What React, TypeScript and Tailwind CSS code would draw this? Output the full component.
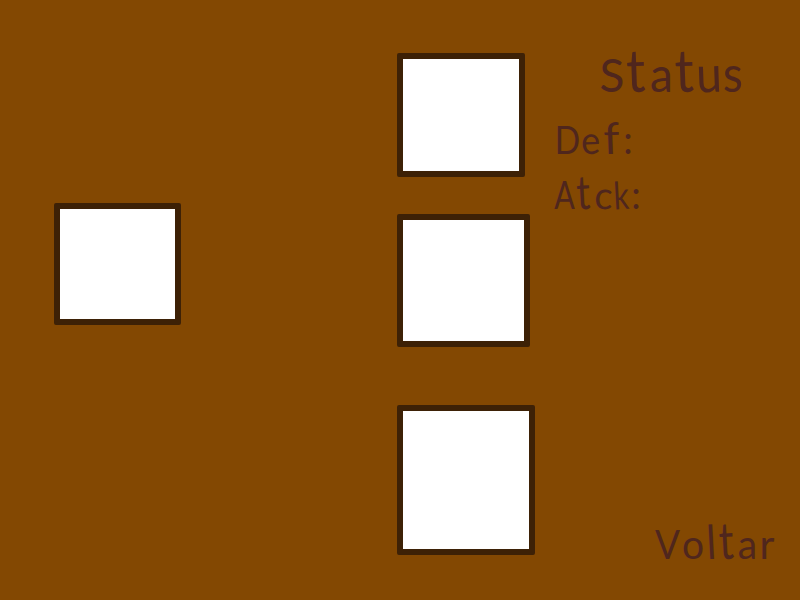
const slot = "box-border shrink-0 rounded-[2px] border-[6px] border-[#3d2106] bg-white";

type Glyph = [string, string];

// Each letter has its own width and slant, giving the words a hand-lettered rhythm.
const status: Glyph[] = [
  ["S", "w-[24px]"],
  ["t", "w-[25px] -rotate-2 scale-x-115 scale-y-130"],
  ["a", "w-[25px] scale-y-105"],
  ["t", "w-[22px] -rotate-2 scale-x-115 scale-y-130"],
  ["u", "w-[27px] -rotate-2 scale-y-110"],
  ["s", "w-[20px] scale-y-110"],
];
const def: Glyph[] = [
  ["D", "w-[27px] scale-x-88"],
  ["e", "w-[20px] -rotate-2 scale-x-95"],
  ["f", "w-[22px] -rotate-2 scale-x-120 scale-y-115"],
  [":", "w-[10px]"],
];
const atck: Glyph[] = [
  ["A", "w-[21px] scale-x-80"],
  ["t", "w-[18px] -rotate-3 scale-y-125"],
  ["c", "w-[20px] rotate-2"],
  ["k", "w-[18px] -rotate-3 scale-x-80"],
  [":", "w-[10px]"],
];
const voltar: Glyph[] = [
  ["V", "w-[25px] scale-x-90"],
  ["o", "w-[26px] scale-x-95"],
  ["l", "w-[12px] -rotate-3 scale-y-115"],
  ["t", "w-[18px] -rotate-3 scale-y-125"],
  ["a", "w-[23px] scale-x-95"],
  ["r", "w-[16px]"],
];

function Lettering({ glyphs }: { glyphs: Glyph[] }) {
  return (
    <>
      {glyphs.map(([letter, style], i) => (
        <span key={i} className={`inline-flex origin-[50%_88%] justify-center ${style}`}>
          {letter}
        </span>
      ))}
    </>
  );
}

export default function App() {
  return (
    <main className="flex h-[600px] w-[800px] overflow-hidden bg-[#834802] font-['Lato',sans-serif] text-[#4f261d]">
      <section className="w-[397px] pt-[203px] pl-[54px]">
        <div className={`${slot} h-[122px] w-[127px]`} />
      </section>

      <section className="flex w-[157px] flex-col pt-[53px]">
        <div className={`${slot} h-[124px] w-[128px]`} />
        <div className={`${slot} mt-[37px] h-[133px] w-[133px]`} />
        <div className={`${slot} mt-[58px] h-[150px] w-[138px]`} />
      </section>

      <section className="flex w-[246px] flex-col pt-[52px] whitespace-nowrap">
        <h1 className="pl-[46px] text-[46px] leading-none font-normal"><Lettering glyphs={status} /></h1>
        <p className="mt-[22px] text-[38px] leading-none"><Lettering glyphs={def} /></p>
        <p className="mt-[17px] text-[38px] leading-none"><Lettering glyphs={atck} /></p>
        <button className="mt-auto mb-[36px] pl-[101px] text-left text-[41px] leading-none"><Lettering glyphs={voltar} /></button>
      </section>
    </main>
  );
}
